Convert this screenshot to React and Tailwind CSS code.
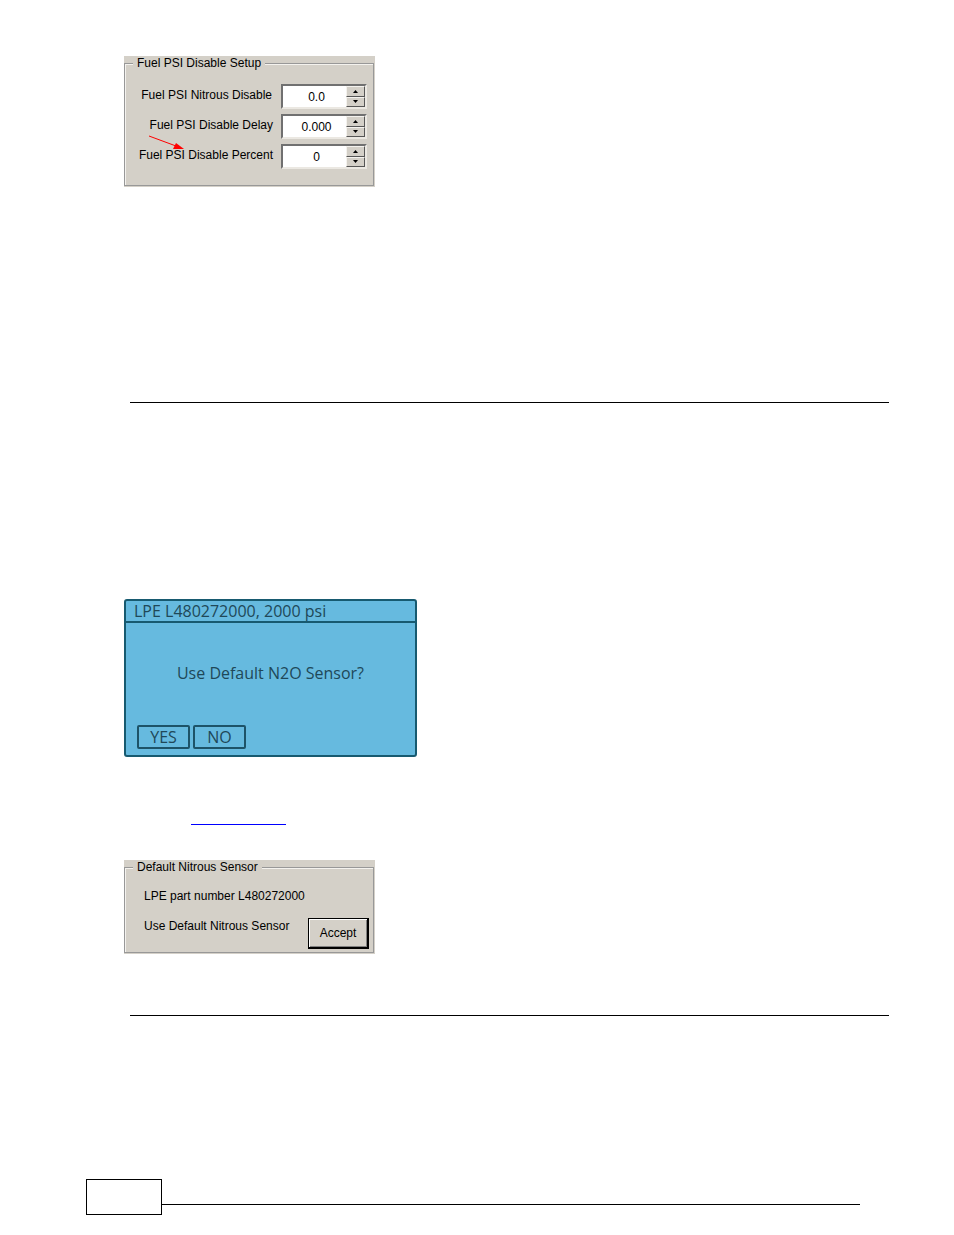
import { useState } from 'react';

const GroupBox = ({ title, children }) => (
  <div className="w-[251px] bg-[#d4d0c8] pr-px pb-px text-black">
    <fieldset className="min-w-0 border border-[#989898] shadow-[inset_1px_1px_0_#f4f2ee]">
      <legend className="ml-2 bg-[#d4d0c8] px-1 text-[12px] leading-[14px]">{title}</legend>
      {children}
    </fieldset>
  </div>
);

const SpinButton = ({ label, points, onClick }) => (
  <button
    type="button"
    aria-label={label}
    onClick={onClick}
    className="flex flex-1 items-center justify-center border border-t-[#f4f2ee] border-l-[#f4f2ee] border-r-[#555] border-b-[#555] bg-[#d4d0c8]"
  >
    <svg viewBox="0 0 5 3" className="h-[3px] w-[5px]">
      <polygon points={points} fill="#000" />
    </svg>
  </button>
);

const SpinField = ({ id, label, decimals, step, labelClass }) => {
  const [value, setValue] = useState((0).toFixed(decimals));

  const change = (amount) => {
    const next = Math.max(0, (Number(value) || 0) + amount);
    setValue(next.toFixed(decimals));
  };

  return (
    <div className="flex items-center justify-end">
      <label htmlFor={id} className={`pb-1 text-[12px] leading-4 whitespace-nowrap ${labelClass}`}>
        {label}
      </label>
      <div className="flex h-[25px] w-[86px] border-2 border-t-[#707070] border-l-[#707070] border-r-[#ebe8e2] border-b-[#ebe8e2] bg-white">
        <input
          id={id}
          type="text"
          value={value}
          onChange={(e) => setValue(e.target.value)}
          className="min-w-0 flex-1 bg-white pl-1 text-center text-[12px] outline-none"
        />
        <div className="flex w-[19px] flex-col">
          <SpinButton label={`Increase ${label}`} points="2.5,0 5,3 0,3" onClick={() => change(step)} />
          <SpinButton label={`Decrease ${label}`} points="0,0 5,0 2.5,3" onClick={() => change(-step)} />
        </div>
      </div>
    </div>
  );
};

const FuelSetup = () => (
  <GroupBox title="Fuel PSI Disable Setup">
    <div className="relative flex flex-col gap-[5px] pt-[14px] pr-[6px] pb-4">
      <SpinField id="nitrous" label="Fuel PSI Nitrous Disable" decimals={1} step={0.1} labelClass="pr-[9px]" />
      <SpinField id="delay" label="Fuel PSI Disable Delay" decimals={3} step={0.001} labelClass="pr-2" />
      <SpinField id="percent" label="Fuel PSI Disable Percent" decimals={0} step={1} labelClass="pr-2" />
      <svg viewBox="0 0 36 16" className="pointer-events-none absolute top-[65px] left-[23px] h-4 w-9">
        <line x1="1" y1="1" x2="28" y2="11" stroke="#f00" />
        <polygon points="28,8 36,14 25,14" fill="#f00" />
      </svg>
    </div>
  </GroupBox>
);

const SensorPrompt = () => (
  <div className="flex h-[158px] w-[293px] flex-col rounded-[3px] border-2 border-[#175a70] bg-[#66badf] font-['Open_Sans','Noto_Sans',sans-serif] text-[16px] leading-5 font-medium text-[#204858]">
    <div className="border-b-2 border-[#175a70] pl-2">LPE L480272000, 2000 psi</div>
    <p className="pt-10 text-center">Use Default N2O Sensor?</p>
    <div className="mt-auto flex gap-[3px] pb-[6px] pl-[11px]">
      <button type="button" className="h-6 w-[53px] rounded-[2px] border-2 border-[#1d5368]">
        YES
      </button>
      <button type="button" className="h-6 w-[53px] rounded-[2px] border-2 border-[#1d5368]">
        NO
      </button>
    </div>
  </div>
);

const DefaultSensor = () => (
  <GroupBox title="Default Nitrous Sensor">
    <div className="pt-[14px] pr-1 pb-[3px] pl-[19px] text-[12px] leading-4">
      <p>LPE part number L480272000</p>
      <div className="flex items-start justify-between pt-[14px]">
        <p className="whitespace-nowrap">Use Default Nitrous Sensor</p>
        <button
          type="button"
          className="h-[31px] w-[61px] border border-r-2 border-b-2 border-black bg-[#d4d0c8] shadow-[inset_1px_1px_0_#fff,inset_-1px_-1px_0_#808080]"
        >
          Accept
        </button>
      </div>
    </div>
  </GroupBox>
);

export default function App() {
  return (
    <div className="min-h-screen bg-white font-['Liberation_Sans',Arial,sans-serif]">
      <main className="pt-14 pr-[65px] pl-[124px]">
        <FuelSetup />
        <hr className="mt-[215px] ml-[6px] border-black" />
        <div className="pt-[196px]">
          <SensorPrompt />
        </div>
        <a href="#sensor" aria-label="Sensor" className="mt-[67px] ml-[67px] block w-[95px] border-b border-[#0000ff]" />
        <div className="pt-[35px]">
          <DefaultSensor />
        </div>
        <hr className="mt-[61px] ml-[6px] border-black" />
      </main>
      <footer className="mt-[163px] flex items-end pr-[94px] pl-[86px]">
        <div className="h-9 w-[76px] border border-black" />
        <div className="mb-[10px] flex-1 border-t border-black" />
      </footer>
    </div>
  );
}
